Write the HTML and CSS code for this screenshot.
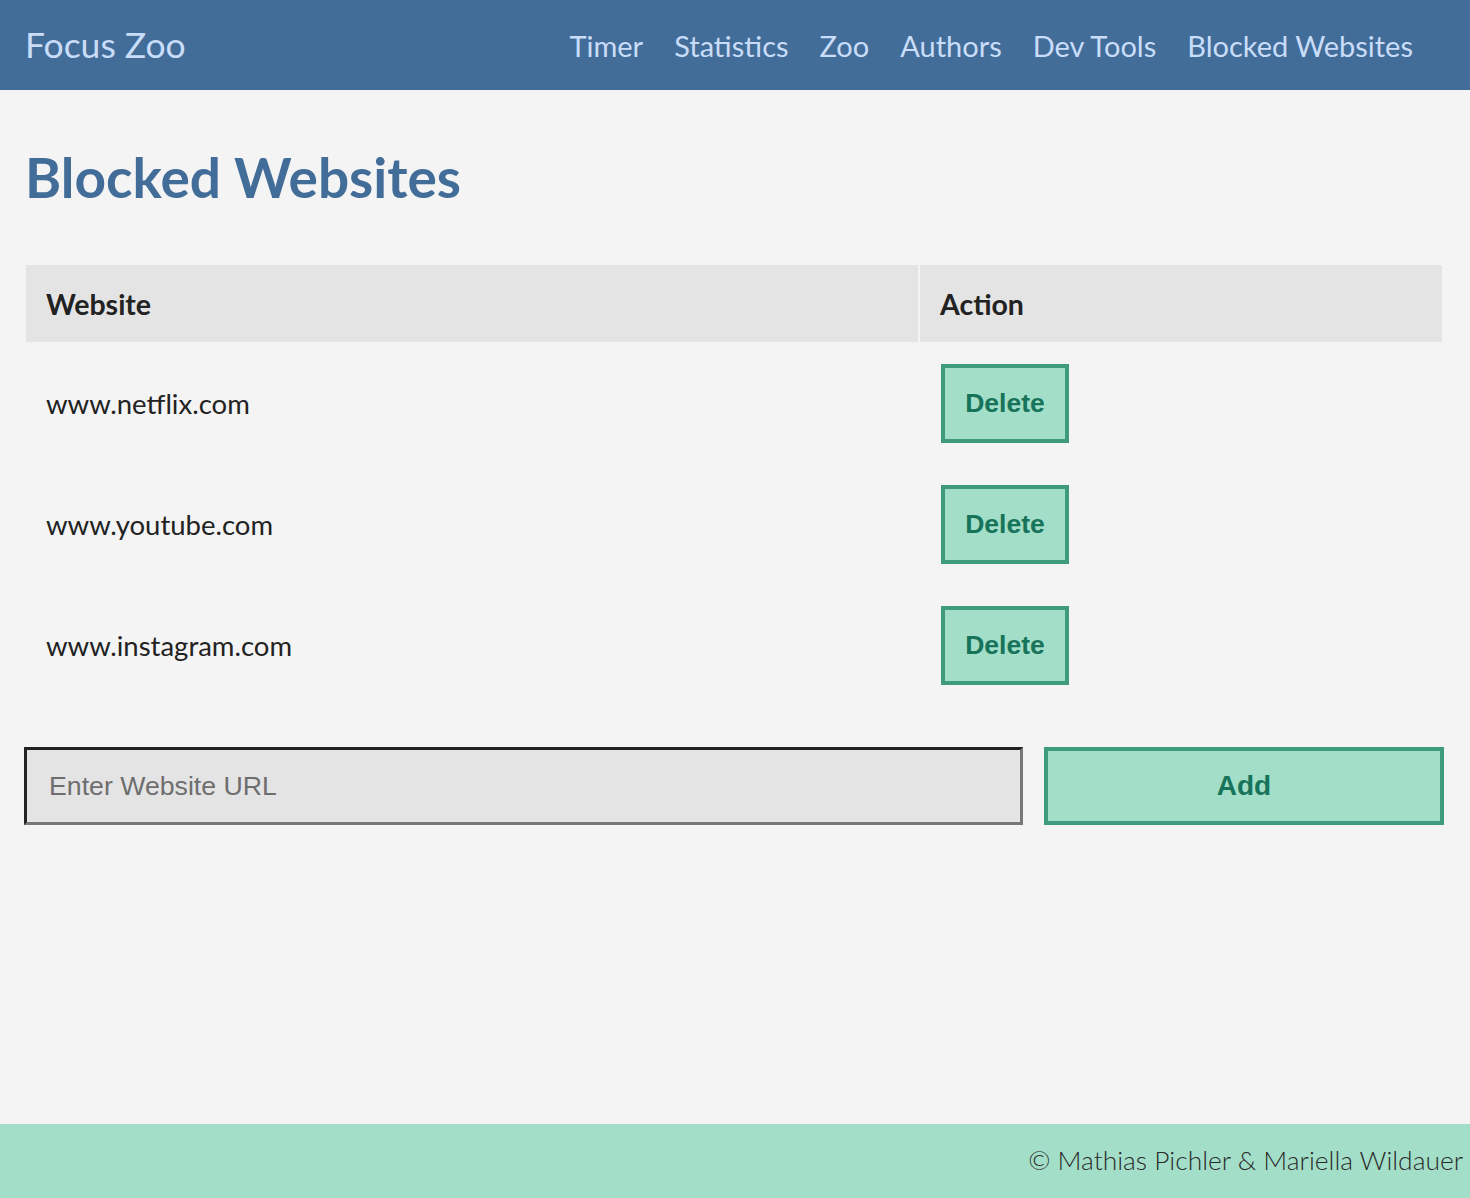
FILE: index.html
```html
<!DOCTYPE html>
<html lang="en">
<head>
<meta charset="utf-8">
<title>Focus Zoo - Blocked Websites</title>
<link rel="stylesheet" href="styles.css">
</head>
<body>
<header class="topbar">
  <div class="brand">Focus Zoo</div>
  <nav class="nav">
    <a href="#">Timer</a>
    <a href="#">Statistics</a>
    <a href="#">Zoo</a>
    <a href="#">Authors</a>
    <a href="#">Dev Tools</a>
    <a href="#">Blocked Websites</a>
  </nav>
</header>
<main class="content">
  <h1 class="title">Blocked Websites</h1>
  <table class="sites">
    <thead>
      <tr><th class="col-site">Website</th><th>Action</th></tr>
    </thead>
    <tbody>
      <tr><td>www.netflix.com</td><td><button class="btn btn-delete">Delete</button></td></tr>
      <tr><td>www.youtube.com</td><td><button class="btn btn-delete">Delete</button></td></tr>
      <tr><td>www.instagram.com</td><td><button class="btn btn-delete">Delete</button></td></tr>
    </tbody>
  </table>
  <form class="add-form">
    <input class="url-input" type="text" placeholder="Enter Website URL">
    <button class="btn btn-add" type="button">Add</button>
  </form>
</main>
<footer class="footer">© Mathias Pichler &amp; Mariella Wildauer</footer>
</body>
</html>
```
FILE: styles.css
```css
* { box-sizing: border-box; }
html, body { height: 100%; }
body {
  margin: 0;
  background: #f4f4f4;
  font-family: Lato, "Open Sans", sans-serif;
  color: #222;
  display: flex;
  flex-direction: column;
  min-height: 1198px;
}
.topbar {
  height: 90px;
  background: #436d99;
  display: flex;
  align-items: center;
  justify-content: space-between;
  padding: 0 57px 0 25px;
}
.brand {
  color: #c9ddf9;
  font-size: 35.5px;
  line-height: 1;
}
.nav {
  display: flex;
  gap: 31px;
}
.nav a {
  color: #c9ddf9;
  text-decoration: none;
  font-size: 29px;
  line-height: 1;
}
.content {
  flex: 1;
  padding: 0 26px 0 24px;
}
.title {
  margin: 55px 0 0;
  font-size: 55px;
  line-height: 64px;
  font-weight: 700;
  color: #436d99;
  padding-left: 1px;
}
.sites {
  margin-top: 54px;
  width: 100%;
  border-collapse: separate;
  border-spacing: 2px;
}
.sites th {
  background: #e4e4e4;
  text-align: left;
  font-size: 28.5px;
  font-weight: 700;
  height: 77px;
  padding: 0 20px;
}
.sites th.col-site { width: 892px; }
.sites td {
  padding: 20px;
  font-size: 27.5px;
  vertical-align: middle;
}
.btn {
  font-family: "Liberation Sans", Arial, sans-serif;
  font-weight: 700;
  background: #a3dfc8;
  color: #17735a;
  border: 4px solid #3f9b7e;
  cursor: pointer;
}
.btn-delete {
  width: 128px;
  height: 79px;
  font-size: 26.5px;
  margin-left: 1px;
}
.add-form {
  display: flex;
  gap: 21px;
  margin-top: 40px;
}
.url-input {
  flex: 1;
  height: 78px;
  background: #e4e4e4;
  border: 3px solid;
  border-color: #222 #777 #777 #222;
  font-family: "Liberation Sans", Arial, sans-serif;
  font-size: 26.7px;
  padding: 0 22px;
  color: #222;
}
.url-input::placeholder { color: #6e6e6e; }
.btn-add {
  width: 400px;
  height: 78px;
  font-size: 28px;
}
.footer {
  height: 74px;
  background: #a3dfc8;
  color: #2a2a2a;
  font-size: 26.4px;
  font-weight: 300;
  text-align: right;
  padding: 20px 7px 0 0;
}
```
